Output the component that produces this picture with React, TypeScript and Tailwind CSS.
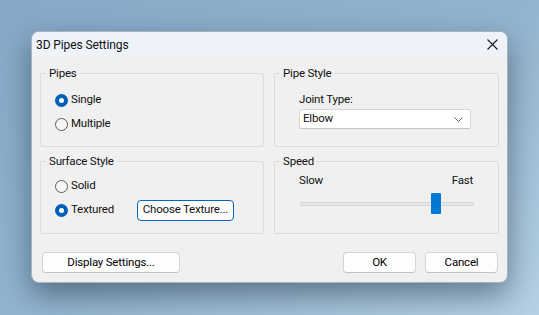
import type { ReactNode } from 'react';

const FONT = { fontFamily: 'Roboto, "Segoe UI", "Liberation Sans", sans-serif' };

function Radio({ checked, label }: { checked?: boolean; label: string }) {
  return (
    <div className="flex h-[16px] items-center gap-[3px]">
      {checked ? (
        <span className="flex h-[13px] w-[13px] items-center justify-center rounded-full bg-[#005fb8]">
          <span className="h-[5px] w-[5px] rounded-full bg-white" />
        </span>
      ) : (
        <span className="h-[13px] w-[13px] rounded-full border border-[#5d5d5d] bg-[#f6f6f6]" />
      )}
      <span>{label}</span>
    </div>
  );
}

function Group({ title, children, className = '' }: { title: string; children: ReactNode; className?: string }) {
  return (
    <fieldset className={`rounded-[2px] border border-[#dcdcdc] ${className}`}>
      <legend className="ml-[5px] px-[3px] leading-[16px]">{title}</legend>
      {children}
    </fieldset>
  );
}

function Button({ children, className = '' }: { children: ReactNode; className?: string }) {
  return (
    <button className={`h-[21px] whitespace-nowrap rounded-[4px] border border-[#d3d3d3] border-b-[#c2c2c2] bg-[#fdfdfd] text-[11.5px] leading-none tracking-[-0.2px] text-black ${className}`}>
      {children}
    </button>
  );
}

export default function App() {
  return (
    <div
      className="h-[315px] w-[539px] overflow-hidden bg-linear-to-br from-[#86a9c7] via-[#93b4cf] to-[#b6d1e4] pl-[31px] pt-[31px] text-[11.5px] tracking-[-0.2px] text-[#111]"
      style={FONT}
    >
      <div className="flex h-[252px] w-[477px] flex-col overflow-hidden rounded-[8px] border border-[#a9b3bd] bg-[#f0f0f0] shadow-[0_12px_30px_rgba(20,40,60,0.5)]">
        {/* Title bar */}
        <div className="flex h-[25px] shrink-0 items-center justify-between bg-[#eef2f9] pl-[4px] pr-[9px]">
          <span className="text-[12px] tracking-[-0.1px]">3D Pipes Settings</span>
          <svg width="11" height="11" viewBox="0 0 11 11" className="text-[#1a1a1a]">
            <path d="M0.5 0.5 L10.5 10.5 M10.5 0.5 L0.5 10.5" stroke="currentColor" strokeWidth="1.1" />
          </svg>
        </div>

        {/* Groups */}
        <div className="grid grid-cols-[224px_225px] gap-x-[10px] gap-y-[6px] pl-[8px] pt-[8px]">
          <Group title="Pipes" className="h-[82px]">
            <div className="flex flex-col gap-[8px] pl-[14px] pt-[11px]">
              <Radio checked label="Single" />
              <Radio label="Multiple" />
            </div>
          </Group>

          <Group title="Pipe Style" className="h-[82px]">
            <div className="flex flex-col gap-[2px] pl-[24px] pt-[10px]">
              <span className="leading-[16px]">Joint Type:</span>
              <div className="flex h-[20px] w-[172px] items-center justify-between rounded-[3px] border border-[#d6d6d6] border-b-[#c4c4c4] bg-white pl-[3px] pr-[7px]">
                <span>Elbow</span>
                <svg width="9" height="5" viewBox="0 0 9 5">
                  <path d="M0.5 0.5 L4.5 4.5 L8.5 0.5" fill="none" stroke="#606060" strokeWidth="1" />
                </svg>
              </div>
            </div>
          </Group>

          <Group title="Surface Style" className="h-[81px]">
            <div className="flex flex-col gap-[6px] pl-[14px] pt-[9px]">
              <Radio label="Solid" />
              <div className="flex h-[20px] items-center">
                <div className="w-[82px]">
                  <Radio checked label="Textured" />
                </div>
                <button className="h-[21px] w-[97px] whitespace-nowrap rounded-[4px] border border-[#0067c0] bg-[#fdfdfd] text-[11.5px] leading-none tracking-[-0.2px]">
                  Choose Texture...
                </button>
              </div>
            </div>
          </Group>

          <Group title="Speed" className="h-[81px]">
            <div className="flex flex-col pl-[24px] pr-[25px] pt-[3px]">
              <div className="flex justify-between leading-[16px]">
                <span>Slow</span>
                <span>Fast</span>
              </div>
              <div className="relative mt-[5px] h-[21px]">
                <div className="absolute left-[1px] right-[-1px] top-[9px] h-[4px] rounded-[1px] border border-[#d6d6d6] bg-[#e6e8e8]" />
                <div className="absolute left-[132px] top-0 h-[21px] w-[10px] rounded-[1px] bg-[#0078d4]" />
              </div>
            </div>
          </Group>
        </div>

        {/* Buttons */}
        <div className="mt-[18px] flex items-center justify-between pl-[10px] pr-[9px]">
          <Button className="w-[138px]">Display Settings...</Button>
          <div className="flex gap-[9px]">
            <Button className="w-[73px]">OK</Button>
            <Button className="w-[73px]">Cancel</Button>
          </div>
        </div>
      </div>
    </div>
  );
}
